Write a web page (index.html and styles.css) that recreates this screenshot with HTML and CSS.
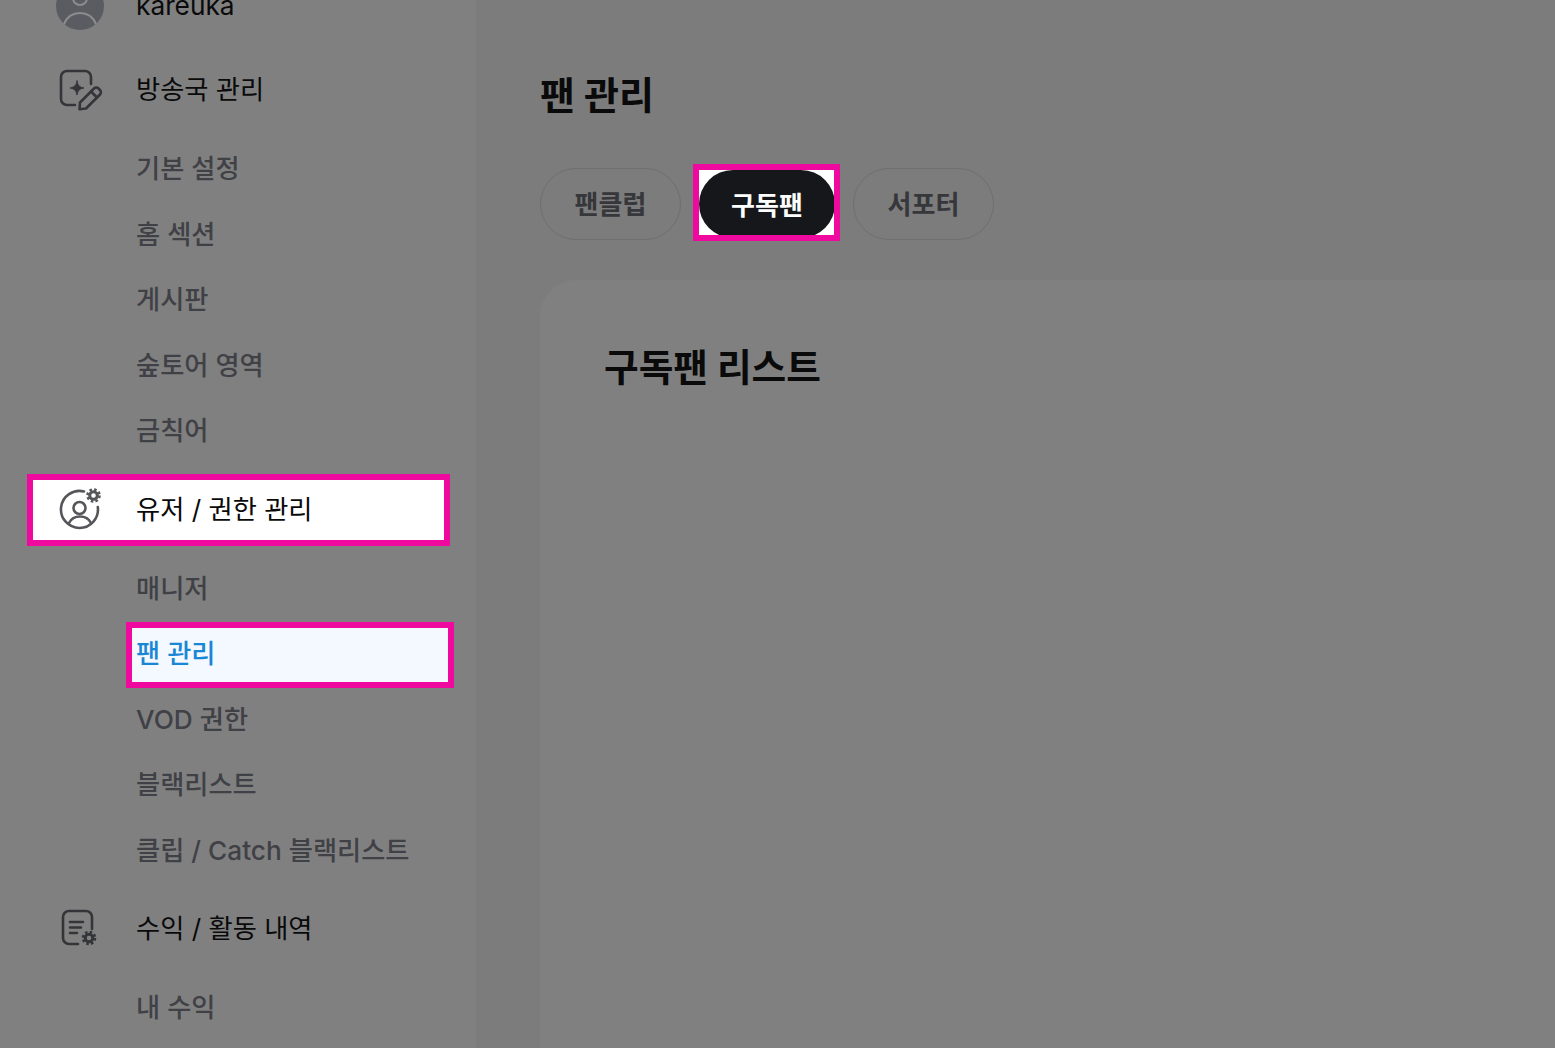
FILE: index.html
```html
<!DOCTYPE html>
<html lang="ko">
<head>
<meta charset="utf-8">
<title>팬 관리</title>
<link rel="stylesheet" href="styles.css">
</head>
<body>
<div class="shell">
  <aside class="sidebar">
    <div class="row main-row first-row">
      <svg class="icon" viewBox="0 0 48 48"><circle cx="24" cy="24" r="24" fill="#5b5c61"/><circle cx="24" cy="16" r="7" fill="none" stroke="#8d8d8f" stroke-width="2"/><path d="M8 42c3-7 9-11 16-11s13 4 16 11" fill="none" stroke="#8d8d8f" stroke-width="2"/></svg>
      <span>kareuka</span>
    </div>
    <div class="row main-row">
      <svg class="icon" viewBox="0 0 48 48" fill="none" stroke="#343538" stroke-width="2.6" stroke-linecap="round" stroke-linejoin="round"><path d="M19 41h-8a6 6 0 0 1-6-6V13a6 6 0 0 1 6-6h18a6 6 0 0 1 6 6v7"/><path d="M21 17c.8 4.600 2.400 6.200 7 7-4.600.8-6.200 2.400-7 7-.8-4.600-2.400-6.200-7-7 4.600-.8 6.200-2.400 7-7z" fill="#343538" stroke-width="1"/><path d="M24 38.500 38 24.500a3.200 3.200 0 0 1 4.500 0l1.500 1.500a3.200 3.200 0 0 1 0 4.500L30 44.500l-6.500.8z"/><path d="m35 27.500 6 6"/></svg>
      <span>방송국 관리</span>
    </div>
    <ul class="sub-list">
      <li class="row sub-row">기본 설정</li>
      <li class="row sub-row">홈 섹션</li>
      <li class="row sub-row">게시판</li>
      <li class="row sub-row">숲토어 영역</li>
      <li class="row sub-row">금칙어</li>
    </ul>
    <div class="row main-row main-hl">
      <svg class="icon" viewBox="0 0 48 48" fill="none" stroke="#55565a" stroke-width="2.600" stroke-linecap="round"><path d="M28 7.500A18.500 18.500 0 1 0 41.800 23"/><circle cx="23.500" cy="24" r="6"/><path d="M13 39c2-4 6-6.500 11-6.500s9 2.500 11 6.500"/><circle cx="37.500" cy="11.500" r="3.800" stroke-width="3"/><circle cx="37.500" cy="11.500" r="6" stroke-width="2.600" stroke-dasharray="2.500 2.200" stroke-linecap="butt"/></svg>
      <span>유저 / 권한 관리</span>
    </div>
    <ul class="sub-list">
      <li class="row sub-row">매니저</li>
      <li class="row sub-row sub-hl">팬 관리</li>
      <li class="row sub-row">VOD 권한</li>
      <li class="row sub-row">블랙리스트</li>
      <li class="row sub-row">클립 / Catch 블랙리스트</li>
    </ul>
    <div class="row main-row">
      <svg class="icon" viewBox="0 0 48 48" fill="none" stroke="#343538" stroke-width="2.600" stroke-linecap="round"><path d="M22 41H13a6 6 0 0 1-6-6V14a6 6 0 0 1 6-6h17a6 6 0 0 1 6 6v12"/><path d="M14 19h13M14 24.500h11M14 30h7"/><circle cx="33" cy="35" r="3.800" stroke-width="3"/><circle cx="33" cy="35" r="6" stroke-width="2.600" stroke-dasharray="2.500 2.200" stroke-linecap="butt"/></svg>
      <span>수익 / 활동 내역</span>
    </div>
    <ul class="sub-list">
      <li class="row sub-row">내 수익</li>
    </ul>
  </aside>
  <main class="content">
    <h1 class="page-title">팬 관리</h1>
    <div class="tabs">
      <button class="tab">팬클럽</button>
      <button class="tab tab-active">구독팬</button>
      <button class="tab">서포터</button>
    </div>
    <section class="panel">
      <h2 class="panel-title">구독팬 리스트</h2>
    </section>
  </main>
</div>
</body>
</html>
```

FILE: styles.css
```css
*, *::before, *::after { box-sizing: border-box; }
html, body {
  margin: 0;
  height: 100%;
  overflow: hidden;
  background: #7c7c7c;
}
body {
  font-family: Inter, "Noto Sans CJK KR", sans-serif;
  color: #0a0a0b;
}
.shell {
  display: flex;
  height: 1048px;
}
.sidebar {
  flex: 0 0 476px;
  margin-top: -30px;
  padding-left: 56px;
  display: flex;
  flex-direction: column;
  gap: 10px;
  font-size: 26.25px;
  background: #808080;
}
.row {
  position: relative;
  isolation: isolate;
  display: flex;
  align-items: center;
}
.main-row {
  flex: 0 0 72px;
  gap: 32px;
}
.first-row span {
  margin-top: -2px;
}
.icon {
  width: 48px;
  height: 48px;
  flex: none;
}
.sub-list {
  list-style: none;
  margin: 0;
  padding: 0 0 0 80px;
}
.sub-row {
  height: 65.5px;
  padding-top: 1px;
  color: #404146;
  font-weight: 500;
}
.main-hl::before,
.sub-hl::before {
  content: "";
  position: absolute;
  z-index: -1;
  border: 6px solid #f0099f;
}
.main-hl::before {
  left: -29px;
  top: 2px;
  width: 423px;
  height: 72px;
  background: #fff;
}
.sub-hl {
  color: #1a86d6;
}
.sub-hl::before {
  left: -10px;
  top: 3px;
  width: 328px;
  height: 66px;
  background: #f4f8ff;
}
.content {
  flex: 1;
  min-width: 0;
  padding: 68px 0 0 64px;
}
.page-title {
  margin: 0 0 46px;
  height: 54px;
  font-size: 38px;
  line-height: 54px;
  font-weight: 700;
}
.tabs {
  isolation: isolate;
  display: flex;
  align-items: center;
  gap: 18px;
  height: 72px;
}
.tab {
  position: relative;
  height: 72px;
  width: 141px;
  padding: 0 0 4px;
  border: 1.75px solid #6f6f71;
  border-radius: 36px;
  background: transparent;
  color: #36373b;
  font: 600 26px Inter, "Noto Sans CJK KR", sans-serif;
}
.tab-active {
  width: 136px;
  height: 68px;
  border: 0;
  padding: 0 0 2px;
  color: #fff;
  background: #16171b;
}
.tab-active::before,
.tab-active::after {
  content: "";
  position: absolute;
  left: -6px;
  top: -6px;
  width: 147px;
  height: 77px;
}
.tab-active::before {
  z-index: -1;
  background: #fff;
}
.tab-active::after {
  border: 6px solid #f0099f;
}
.panel {
  margin-top: 40px;
  height: 800px;
  padding: 64px;
  background: #808080;
  border-top-left-radius: 36px;
}
.panel-title {
  margin: 0;
  font-size: 37.7px;
  line-height: 46px;
  font-weight: 700;
}
```
